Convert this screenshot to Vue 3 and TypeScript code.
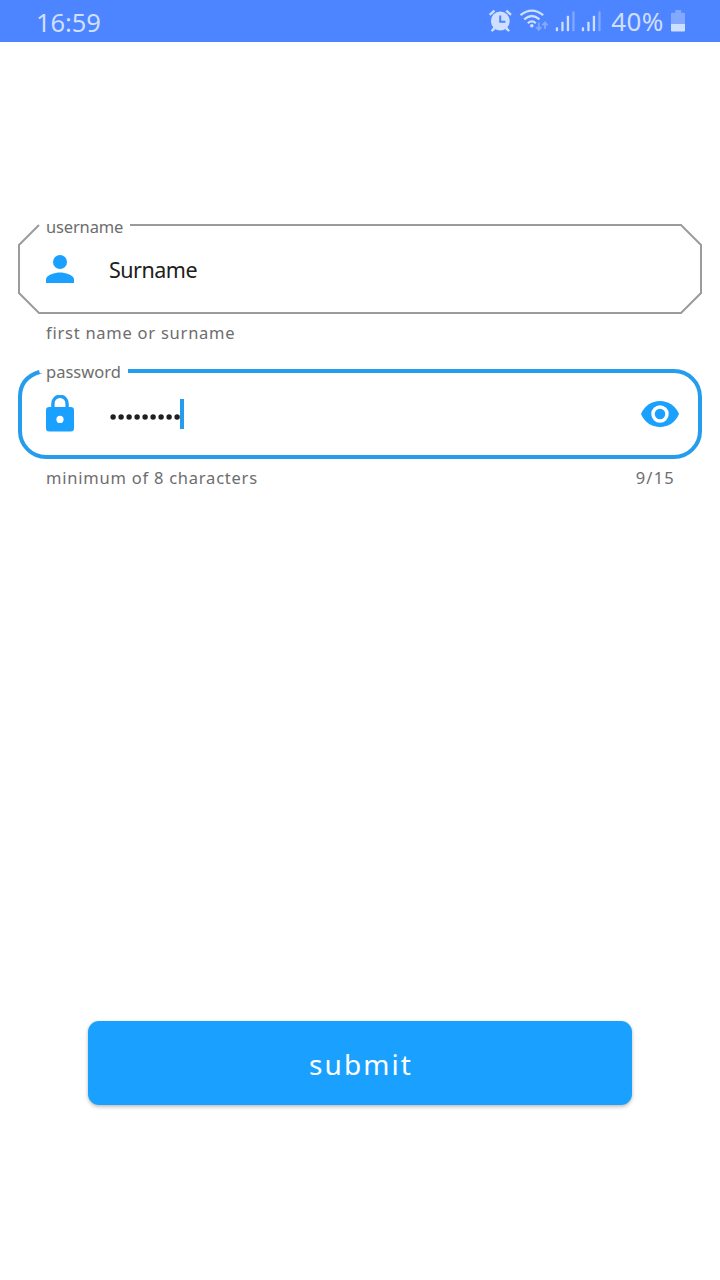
<script setup lang="ts">
import { ref } from 'vue'

const username = ref('Surname')
const password = ref('•••••••••')
const maxLength = 15
const signalBars = [4, 9.5, 15.5, 20]
const signals = [555.8, 581.8]
</script>

<template>
  <main class="screen">
    <header class="status">
      <span class="clock">16:59</span>
      <svg class="status-icons" width="212" height="42" viewBox="484 0 212 42" aria-hidden="true">
        <g fill="#cfdfff">
          <circle cx="500.3" cy="21" r="9.4" />
          <path d="M493.5 27l-2.8 3.8 1.8.9 3.5-3zM507.2 27l2.8 3.8-1.8.9-3.5-3z" />
        </g>
        <path d="M489.7 14.8l4.8-4.2M511 14.8l-4.8-4.2" stroke="#cfdfff" stroke-width="2.4" fill="none" />
        <path d="M500.2 15.5v6.3h5.2" stroke="#4d84ff" stroke-width="2" fill="none" />
        <g stroke="#cfdfff" stroke-width="2.2" fill="none">
          <path d="M520.5 15.2q11.3-9 22.7 0" />
          <path d="M524.2 19.3q7.7-6.6 15.3 0" />
          <path d="M527.8 23.2q4-3.6 8 0" />
        </g>
        <circle cx="531.8" cy="25.8" r="1.8" fill="#cfdfff" />
        <path d="M538.8 22.5v7M536.2 27l2.6 2.9 2.6-2.9M545 29v-6M542.4 25.3l2.6-2.9 2.6 2.9" stroke="#82a9ff" stroke-width="1.8" fill="none" />
        <g v-for="x in signals" :key="x">
          <rect v-for="(h, i) in signalBars" :key="h" :x="x + i * 5.5" :y="31.2 - h" width="2.3" :height="h" rx=".8" :fill="i === 3 ? '#82a9ff' : '#cfdfff'" />
        </g>
        <text x="611.3" y="31" class="percent">40%</text>
        <path d="M671 24V14q0-1.3 1.3-1.3h3V10h5.8v2.7h2.6q1.3 0 1.3 1.3v10z" fill="#82a9ff" />
        <path d="M671 24h14v6.2q0 1.3-1.3 1.3h-11.4q-1.3 0-1.3-1.3z" fill="#cfdfff" />
      </svg>
    </header>

    <form class="form" @submit.prevent>
      <div class="field">
        <svg class="outline" width="684" height="90" viewBox="0 0 684 90" aria-hidden="true">
          <path d="M112 1H663L683 21V69L663 89H21L1 69V21L21 1" fill="none" stroke="#9b9b9b" stroke-width="2" />
        </svg>
        <span class="label label-user"><span>username</span></span>
        <svg class="lead" width="28" height="38" viewBox="0 0 28 38" aria-hidden="true">
          <circle cx="14" cy="12" r="7" fill="#1aa1ff" />
          <path d="M0 33v-3.5C0 25 9.3 22.6 14 22.6s14 2.4 14 6.9V33z" fill="#1aa1ff" />
        </svg>
        <span class="value">{{ username }}</span>
      </div>
      <p class="helper"><span class="hint-user">first name or surname</span></p>

      <div class="field">
        <svg class="outline" width="684" height="90" viewBox="0 0 684 90" aria-hidden="true">
          <path d="M110 2H656A26 26 0 0 1 682 28V62A26 26 0 0 1 656 88H28A26 26 0 0 1 2 62V28Q2 9 21.5 3" fill="none" stroke="#269ced" stroke-width="4" />
          <path d="M20 4l5 .2-5 1z" fill="#269ced" />
        </svg>
        <span class="label label-pass"><span>password</span></span>
        <svg class="lead" width="28" height="38" viewBox="0 1 28 38" aria-hidden="true">
          <path d="M6.9 14V9.4a7.1 7.1 0 0 1 14.2 0V14" fill="none" stroke="#1f9ff5" stroke-width="3.4" />
          <path fill-rule="evenodd" d="M3.3 13h21.4Q28 13 28 16.3v18q0 3.3-3.3 3.3H3.3Q0 37.6 0 34.3v-18Q0 13 3.3 13zM14 21.8a3.6 3.6 0 1 0 0 7.2 3.6 3.6 0 0 0 0-7.2z" fill="#1aa1ff" />
        </svg>
        <svg class="dots" width="71" height="8" viewBox="0 0 71 8" role="img" aria-label="password">
          <circle v-for="(_, i) in password" :key="i" :cx="3.1 + i * 8" cy="4" r="2.7" fill="#202020" />
        </svg>
        <span class="caret"></span>
        <svg class="eye" width="38" height="26" viewBox="0 0 38 26" aria-hidden="true">
          <path d="M0 13C3 5.2 10.5 0 19 0s16 5.2 19 13c-3 7.8-10.5 13-19 13S3 20.8 0 13z" fill="#1aa1ff" />
          <circle cx="19" cy="13" r="7" fill="#1aa1ff" stroke="#fff" stroke-width="3.5" />
        </svg>
      </div>
      <p class="helper">
        <span class="hint-pass">minimum of 8 characters</span>
        <span class="count">{{ password.length }}/{{ maxLength }}</span>
      </p>

      <button class="submit" type="submit">submit</button>
    </form>
  </main>
</template>

<style>
body { margin: 0; background: #fff; }
</style>

<style scoped>
.screen {
  width: 720px;
  height: 1280px;
  overflow: hidden;
  background: #fff;
  font-family: "Noto Sans", "Open Sans", sans-serif;
}
.status {
  display: flex;
  align-items: center;
  justify-content: space-between;
  box-sizing: border-box;
  height: 42px;
  padding: 0 24px 0 36px;
  background: #4d84ff;
  color: #cfdfff;
}
.clock { font-size: 25.5px; line-height: 42px; letter-spacing: -.1px; padding-top: 1px; }
.status-icons { display: block; }
.percent { font-size: 26px; letter-spacing: .4px; fill: #cfdfff; }
.form {
  display: flex;
  flex-direction: column;
  height: 1063px;
  padding: 182px 18px 0;
  box-sizing: border-box;
}
.field {
  position: relative;
  display: flex;
  align-items: center;
  height: 90px;
  box-sizing: border-box;
  padding: 0 23px 0 28px;
}
.outline { position: absolute; inset: 0; }
.label {
  position: absolute;
  left: 28px;
  height: 22px;
  overflow: hidden;
  font-size: 16.5px;
  line-height: 22px;
  color: #6d6d6d;
  white-space: nowrap;
}
.label-user { top: 0; letter-spacing: -.15px; }
.label-user span { display: block; margin-top: -8px; }
.label-pass { top: -8px; }
.lead { flex: none; }
.value { margin-left: 35px; padding-top: 1px; font-size: 21.5px; letter-spacing: -.5px; color: #202020; }
.dots { margin: 6px 0 0 36px; }
.caret { width: 4px; height: 30px; margin-left: -1px; background: #269ced; }
.eye { margin-left: auto; }
.helper {
  display: flex;
  justify-content: space-between;
  height: 55px;
  margin: 0;
  padding: 7px 27px 0 28px;
  box-sizing: border-box;
  font-size: 16.5px;
  line-height: 24px;
  color: #6d6d6d;
}
.hint-user { letter-spacing: .75px; }
.hint-pass { letter-spacing: .77px; }
.count { letter-spacing: 1.2px; }
.submit {
  flex: none;
  align-self: center;
  width: 544px;
  height: 84px;
  margin-top: 507px;
  padding: 2px 0 0 2px;
  border: 0;
  border-radius: 11px;
  background: #1aa1ff;
  box-shadow: 0 2px 4px rgba(0, 0, 0, .2), 0 1px 3px rgba(0, 0, 0, .1);
  color: #fff;
  font-family: inherit;
  font-size: 28px;
  letter-spacing: 2.1px;
}
</style>
